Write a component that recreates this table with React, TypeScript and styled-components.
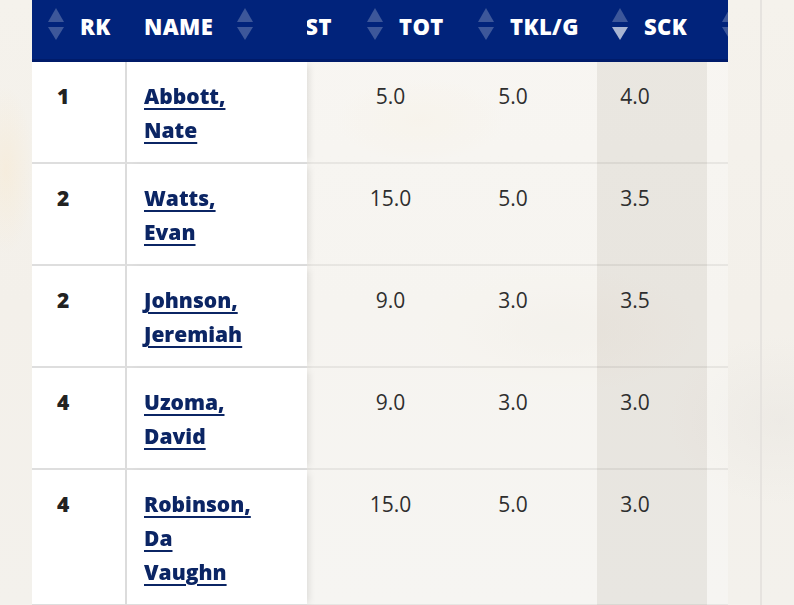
import React, { useLayoutEffect, useRef } from "react";
import styled, { createGlobalStyle, css } from "styled-components";

const Global = createGlobalStyle`
  html, body { margin: 0; padding: 0; }
  body {
    min-height: 605px;
    overflow: hidden;
    font-family: "Open Sans", "Liberation Sans", sans-serif;
    background-color: #f4f1eb;
    background-image:
      radial-gradient(ellipse 40px 120px at 6px 170px, rgba(248, 232, 205, 0.45), transparent 70%),
      radial-gradient(ellipse 120px 60px at 420px 120px, rgba(245, 230, 205, 0.25), transparent 70%),
      radial-gradient(ellipse 200px 90px at 560px 330px, rgba(235, 230, 220, 0.4), transparent 70%),
      radial-gradient(ellipse 160px 120px at 780px 420px, rgba(232, 229, 224, 0.5), transparent 70%),
      linear-gradient(180deg, #f5f2ec 0%, #f3f0ea 50%, #f3f1ec 100%);
  }
`;

const Page = styled.div`
  display: flex;
  align-items: stretch;
  min-height: 605px;
  padding-left: 32px;
`;

const TableWrap = styled.div`
  width: 696px;
  flex: none;
  overflow: hidden;
`;

const Gutter = styled.div`
  width: 32px;
  flex: none;
`;

const Divider = styled.div`
  width: 2px;
  flex: none;
  background: #e6e3df;
`;

const Table = styled.table`
  border-collapse: separate;
  border-spacing: 0;
  table-layout: fixed;
  width: 990px;
  font-size: 21px;
`;

const stickyBase = css<{ $col?: "rk" | "name" }>`
  ${(p) =>
    p.$col &&
    css`
      position: sticky;
      z-index: 2;
      left: ${p.$col === "rk" ? "0" : "95px"};
    `}
`;

const Th = styled.th<{ $col?: "rk" | "name" }>`
  ${stickyBase};
  height: 62px;
  padding: 0 0 8px ${(p) => (p.$col === "rk" ? "16px" : p.$col === "name" ? "17px" : "15px")};
  background: #01237b;
  border-bottom: 3px solid #001b6a;
  color: #ffffff;
  font-size: 22px;
  letter-spacing: 0.4px;
  font-weight: 800;
  text-align: left;
  white-space: nowrap;
  box-sizing: border-box;
  vertical-align: middle;
`;

const HeadInner = styled.div<{ $gap?: number }>`
  display: flex;
  align-items: center;
  gap: ${(p) => p.$gap ?? 16}px;
  line-height: 1;
`;

const SortIcon = styled.svg`
  width: 16px;
  height: 32px;
  flex: none;
  margin-top: -3px;
`;

const Td = styled.td<{ $col?: "rk" | "name"; $sorted?: boolean }>`
  ${stickyBase};
  padding: 17px 34px 15px 0;
  line-height: 34px;
  vertical-align: top;
  box-sizing: border-box;
  color: #2e2e2e;
  border-bottom: 2px solid rgba(0, 0, 0, 0.06);
  background: ${(p) =>
    p.$sorted ? "rgba(110, 100, 90, 0.075)" : "rgba(255, 255, 255, 0.3)"};
  text-align: center;
  ${(p) =>
    p.$col &&
    css`
      background: #ffffff;
      border-bottom: 2px solid #dedede;
      text-align: left;
      padding-right: 0;
    `}
  ${(p) =>
    p.$col === "rk" &&
    css`
      padding-left: 25px;
      font-weight: 800;
      color: #222222;
      border-right: 2px solid #dcdcdc;
    `}
  ${(p) =>
    p.$col === "name" &&
    css`
      padding-left: 17px;
      box-shadow: 5px 0 7px -3px rgba(0, 0, 0, 0.1);
    `}
`;

const NameLink = styled.a`
  color: #0b2564;
  font-weight: 800;
  text-decoration: underline;
  text-decoration-thickness: 2px;
  text-underline-offset: 4px;
`;

const Row = styled.tr``;

type ColKey = "rk" | "name" | "solo" | "ast" | "tot" | "tklg" | "sck" | "tfl";

const columns: { key: ColKey; label: string; width: number }[] = [
  { key: "rk", label: "RK", width: 95 },
  { key: "name", label: "NAME", width: 180 },
  { key: "solo", label: "SOLO", width: 110 },
  { key: "ast", label: "AST", width: 110 },
  { key: "tot", label: "TOT", width: 111 },
  { key: "tklg", label: "TKL/G", width: 134 },
  { key: "sck", label: "SCK", width: 110 },
  { key: "tfl", label: "TFL", width: 140 },
];

type Player = {
  rk: number;
  name: string[];
  solo: string;
  ast: string;
  tot: string;
  tklg: string;
  sck: string;
  tfl: string;
};

const players: Player[] = [
  { rk: 1, name: ["Abbott,", "Nate"], solo: "3.0", ast: "2.0", tot: "5.0", tklg: "5.0", sck: "4.0", tfl: "4.0" },
  { rk: 2, name: ["Watts,", "Evan"], solo: "9.0", ast: "6.0", tot: "15.0", tklg: "5.0", sck: "3.5", tfl: "4.0" },
  { rk: 2, name: ["Johnson,", "Jeremiah"], solo: "6.0", ast: "3.0", tot: "9.0", tklg: "3.0", sck: "3.5", tfl: "4.5" },
  { rk: 4, name: ["Uzoma,", "David"], solo: "5.0", ast: "4.0", tot: "9.0", tklg: "3.0", sck: "3.0", tfl: "3.0" },
  { rk: 4, name: ["Robinson,", "Da", "Vaughn"], solo: "10.0", ast: "5.0", tot: "15.0", tklg: "5.0", sck: "3.0", tfl: "5.0" },
];

function Sorter({ active }: { active?: "desc" }) {
  const dim = "rgba(255,255,255,0.24)";
  const lit = "rgba(255,255,255,0.66)";
  return (
    <SortIcon viewBox="0 0 16 32" aria-hidden="true">
      <path d="M8 0 L16 14 L0 14 Z" fill={dim} />
      <path d="M0 19 L16 19 L8 32 Z" fill={active === "desc" ? lit : dim} />
    </SortIcon>
  );
}

export default function App() {
  const wrapRef = useRef<HTMLDivElement>(null);
  useLayoutEffect(() => {
    if (wrapRef.current) wrapRef.current.scrollLeft = 175;
  }, []);

  return (
    <>
      <Global />
      <Page>
        <TableWrap ref={wrapRef}>
          <Table>
            <colgroup>
              {columns.map((c) => (
                <col key={c.key} style={{ width: c.width }} />
              ))}
            </colgroup>
            <thead>
              <tr>
                {columns.map((c) => {
                  const sticky = c.key === "rk" || c.key === "name" ? c.key : undefined;
                  return (
                    <Th key={c.key} $col={sticky}>
                      {c.key === "name" ? (
                        <HeadInner $gap={24}>
                          {c.label}
                          <Sorter />
                        </HeadInner>
                      ) : (
                        <HeadInner>
                          <Sorter active={c.key === "sck" ? "desc" : undefined} />
                          {c.label}
                        </HeadInner>
                      )}
                    </Th>
                  );
                })}
              </tr>
            </thead>
            <tbody>
              {players.map((p, i) => (
                <Row key={i}>
                  <Td $col="rk">{p.rk}</Td>
                  <Td $col="name">
                    <NameLink href="#">
                      {p.name.map((part, j) => (
                        <React.Fragment key={j}>
                          {j > 0 && <br />}
                          {part}
                        </React.Fragment>
                      ))}
                    </NameLink>
                  </Td>
                  <Td>{p.solo}</Td>
                  <Td>{p.ast}</Td>
                  <Td>{p.tot}</Td>
                  <Td>{p.tklg}</Td>
                  <Td $sorted>{p.sck}</Td>
                  <Td>{p.tfl}</Td>
                </Row>
              ))}
            </tbody>
          </Table>
        </TableWrap>
        <Gutter />
        <Divider />
      </Page>
    </>
  );
}
